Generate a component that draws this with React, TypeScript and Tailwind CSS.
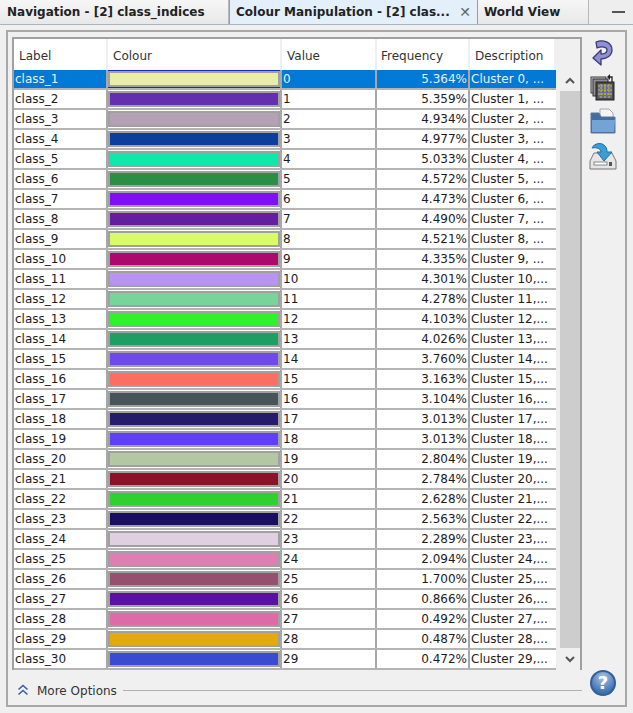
import React from 'react';

const rows: [string, string, string][] = [
  ['#e8eeaa', '5.364%', 'Cluster 0, ...'],
  ['#642fae', '5.359%', 'Cluster 1, ...'],
  ['#b5a1b5', '4.934%', 'Cluster 2, ...'],
  ['#0b3f9b', '4.977%', 'Cluster 3, ...'],
  ['#0fe8aa', '5.033%', 'Cluster 4, ...'],
  ['#2a8f44', '4.572%', 'Cluster 5, ...'],
  ['#7f0ff5', '4.473%', 'Cluster 6, ...'],
  ['#651f9e', '4.490%', 'Cluster 7, ...'],
  ['#d8fb66', '4.521%', 'Cluster 8, ...'],
  ['#ab0a6c', '4.335%', 'Cluster 9, ...'],
  ['#b893f0', '4.301%', 'Cluster 10,...'],
  ['#78d59a', '4.278%', 'Cluster 11,...'],
  ['#2df22d', '4.103%', 'Cluster 12,...'],
  ['#1f9e63', '4.026%', 'Cluster 13,...'],
  ['#7049ee', '3.760%', 'Cluster 14,...'],
  ['#fb6f61', '3.163%', 'Cluster 15,...'],
  ['#46555a', '3.104%', 'Cluster 16,...'],
  ['#261c6b', '3.013%', 'Cluster 17,...'],
  ['#5f3ffb', '3.013%', 'Cluster 18,...'],
  ['#b3c8a2', '2.804%', 'Cluster 19,...'],
  ['#8a1329', '2.784%', 'Cluster 20,...'],
  ['#2fd02f', '2.628%', 'Cluster 21,...'],
  ['#180f5f', '2.563%', 'Cluster 22,...'],
  ['#dfcfe0', '2.289%', 'Cluster 23,...'],
  ['#dc7fb3', '2.094%', 'Cluster 24,...'],
  ['#95506f', '1.700%', 'Cluster 25,...'],
  ['#5a10a0', '0.866%', 'Cluster 26,...'],
  ['#de6aa8', '0.492%', 'Cluster 27,...'],
  ['#e2aa0e', '0.487%', 'Cluster 28,...'],
  ['#3a4bcf', '0.472%', 'Cluster 29,...'],
];

function HeaderCell({ label, className }: { label: string; className: string }) {
  return (
    <div className={`${className} shrink-0 h-full flex items-center pt-[2px] border-r-2 border-[#f0f0f0] text-[#333]`}>
      {label}
    </div>
  );
}

function Row({ index, colour, freq, desc }: { index: number; colour: string; freq: string; desc: string }) {
  const selected = index === 0;
  const cell = 'shrink-0 h-full flex items-center border-r-2 border-[#a8a8a8]';
  return (
    <div className={`h-[20px] flex border-b-2 border-[#b4b4b4] ${selected ? 'bg-[#0278d7] text-[#e8f2fb]' : 'bg-white text-[#1c1c1c]'}`}>
      <div className={`${cell} w-[94px] pl-[1px]`}>class_{index + 1}</div>
      <div className={`${cell} w-[174px] ${selected ? 'bg-[#2222cc]' : 'bg-white'}`}>
        <div className="w-full h-[16px] border-2 border-[#a0a0a0]" style={{ backgroundColor: colour }} />
      </div>
      <div className={`${cell} w-[95px] pl-[1px]`}>{index}</div>
      <div className={`${cell} w-[93px] justify-end pr-[1px]`}>{freq}</div>
      <div className="shrink-0 w-[86px] h-full flex items-center pl-[1px] whitespace-nowrap overflow-hidden">{desc}</div>
    </div>
  );
}

function RedoIcon() {
  return (
    <svg width="22" height="27" viewBox="0 0 22 27">
      <path d="M4 2 C11 -1 20 2 20 10 C20 16 14 19 9 19 L9 25 L1 18 L9 10 L9 14 C12 14 15 13 15 10 C15 7 10 6 5 8 Z" fill="#8f90d4" stroke="#3a3a74" strokeWidth="1.3" strokeLinejoin="round" />
    </svg>
  );
}

function LayersIcon() {
  return (
    <svg width="26" height="27" viewBox="0 0 26 27">
      <rect x="1" y="3" width="15" height="16" fill="#c4c4c4" stroke="#3c3c3c" />
      <rect x="3" y="5" width="15" height="17" fill="#8e8e8e" stroke="#333" />
      <rect x="6" y="8" width="18" height="18" fill="#4a4a4a" stroke="#222" />
      <path d="M8 10h14v14H8z" fill="#6a6a9a" />
      <path d="M8 12h14 M8 16h14 M8 20h14 M11 10v14 M15 10v14 M19 10v14" fill="none" stroke="#c8c030" strokeWidth="1" strokeDasharray="2 1" />
      <path d="M22 8V3h-3" fill="none" stroke="#222" strokeWidth="1.3" />
      <path d="M20 0l-3 3 3 3z" fill="#222" />
    </svg>
  );
}

function FolderIcon() {
  return (
    <svg width="26" height="27" viewBox="0 0 26 27">
      <path d="M10 1h9l4 4v9H10z" fill="#f5f5f5" stroke="#a8a8a8" />
      <path d="M1 5h8l2 4h14v16H1z" fill="#41709f" stroke="#5f7690" />
      <path d="M2 12h23l-1 12H2z" fill="#74a4d6" />
    </svg>
  );
}

function SaveIcon() {
  return (
    <svg width="28" height="28" viewBox="0 0 28 28">
      <path d="M5 11h18l4 8v8H1v-8z" fill="#e6e6e6" stroke="#777" />
      <rect x="5" y="20" width="13" height="3" fill="#fff" stroke="#888" />
      <rect x="20" y="20" width="3" height="4" fill="#555" />
      <path d="M3 6 C5 1 13 0 16 4 C18 6 18 8 18 10 L23 10 L15 19 L8 10 L12 10 C12 7 8 5 3 6 Z" fill="#3b9dd6" stroke="#236f9f" strokeLinejoin="round" />
    </svg>
  );
}

function HelpIcon() {
  return (
    <div className="w-[26px] h-[26px] rounded-full border-2 border-[#2f5f9c] bg-[radial-gradient(circle_at_50%_25%,#a9c4e6,#3f70b0_75%)] flex items-center justify-center text-white font-bold text-[18px] leading-none">
      ?
    </div>
  );
}

export default function App() {
  return (
    <div className="w-[633px] h-[713px] bg-[#f0f0f0] font-['DejaVu_Sans',sans-serif] text-[12px] overflow-hidden flex flex-col">
      <div className="h-[25px] flex shrink-0 border-b border-[#a9b4bf] font-bold text-[#222]">
        <div className="w-[229px] flex items-center pl-[7px] bg-gradient-to-b from-[#f6f6f6] to-[#e8e8e8] border-r border-[#b8b8b8] whitespace-nowrap">
          Navigation - [2] class_indices
        </div>
        <div className="w-[249px] flex items-center pl-[6px] pr-[6px] justify-between bg-[#e3effa] border-x border-[#7aa5c9] whitespace-nowrap">
          <span>Colour Manipulation - [2] clas...</span>
          <span className="text-[#666] font-normal text-[14px] leading-none">✕</span>
        </div>
        <div className="w-[111px] flex items-center pl-[6px] bg-gradient-to-b from-[#f6f6f6] to-[#e8e8e8] border-r border-[#b8b8b8]">
          World View
        </div>
        <div className="flex-1 flex items-center justify-end pr-[8px] bg-[#eeeeee]">
          <div className="w-[13px] h-[2px] bg-[#555]" />
        </div>
      </div>
      <div className="mt-[5px] mx-[6px] w-[621px] h-[677px] border-2 border-[#a8a8a8] pt-[5px] pl-[4px] flex flex-col">
        <div className="flex">
          <div className="w-[570px] h-[633px] border-2 border-[#a0a0a0] border-b-0 flex shrink-0">
            <div className="w-[542px] shrink-0">
              <div className="h-[31px] flex bg-white">
                <HeaderCell label="Label" className="w-[94px] pl-[5px]" />
                <HeaderCell label="Colour" className="w-[174px] pl-[5px]" />
                <HeaderCell label="Value" className="w-[95px] pl-[5px]" />
                <HeaderCell label="Frequency" className="w-[93px] pl-[4px]" />
                <HeaderCell label="Description" className="w-[86px] pl-[5px]" />
              </div>
              {rows.map((r, i) => (
                <Row key={i} index={i} colour={r[0]} freq={r[1]} desc={r[2]} />
              ))}
            </div>
            <div className="flex-1 flex flex-col items-end pt-[31px]">
              <div className="w-[20px] h-[21px] flex items-center justify-center">
                <svg width="10" height="7" viewBox="0 0 10 7"><path d="M1 6l4-4 4 4" fill="none" stroke="#555" strokeWidth="2" /></svg>
              </div>
              <div className="w-[20px] flex-1 bg-[#cdcdcd]" />
              <div className="w-[20px] h-[22px] flex items-center justify-center">
                <svg width="10" height="7" viewBox="0 0 10 7"><path d="M1 1l4 4 4-4" fill="none" stroke="#555" strokeWidth="2" /></svg>
              </div>
            </div>
          </div>
          <div className="flex-1 flex flex-col items-center gap-[7px] pt-[3px] pr-[1px]">
            <RedoIcon />
            <LayersIcon />
            <FolderIcon />
            <SaveIcon />
          </div>
        </div>
        <div className="flex items-start">
          <div className="w-[570px] shrink-0 mt-[14px] h-[14px] flex items-center pl-[5px] text-[#333]">
            <svg width="12" height="12" viewBox="0 0 12 12" className="mr-[8px] mb-[3px]">
              <path d="M1.5 5.5L6 1.5l4.5 4 M1.5 10.5L6 6.5l4.5 4" fill="none" stroke="#3a5fa8" strokeWidth="1.6" />
            </svg>
            <span>More Options</span>
            <div className="flex-1 h-[1px] bg-[#b0b0b0] ml-[6px] mb-[2px]" />
          </div>
          <div className="flex-1 flex justify-center pr-[1px]">
            <HelpIcon />
          </div>
        </div>
      </div>
    </div>
  );
}
